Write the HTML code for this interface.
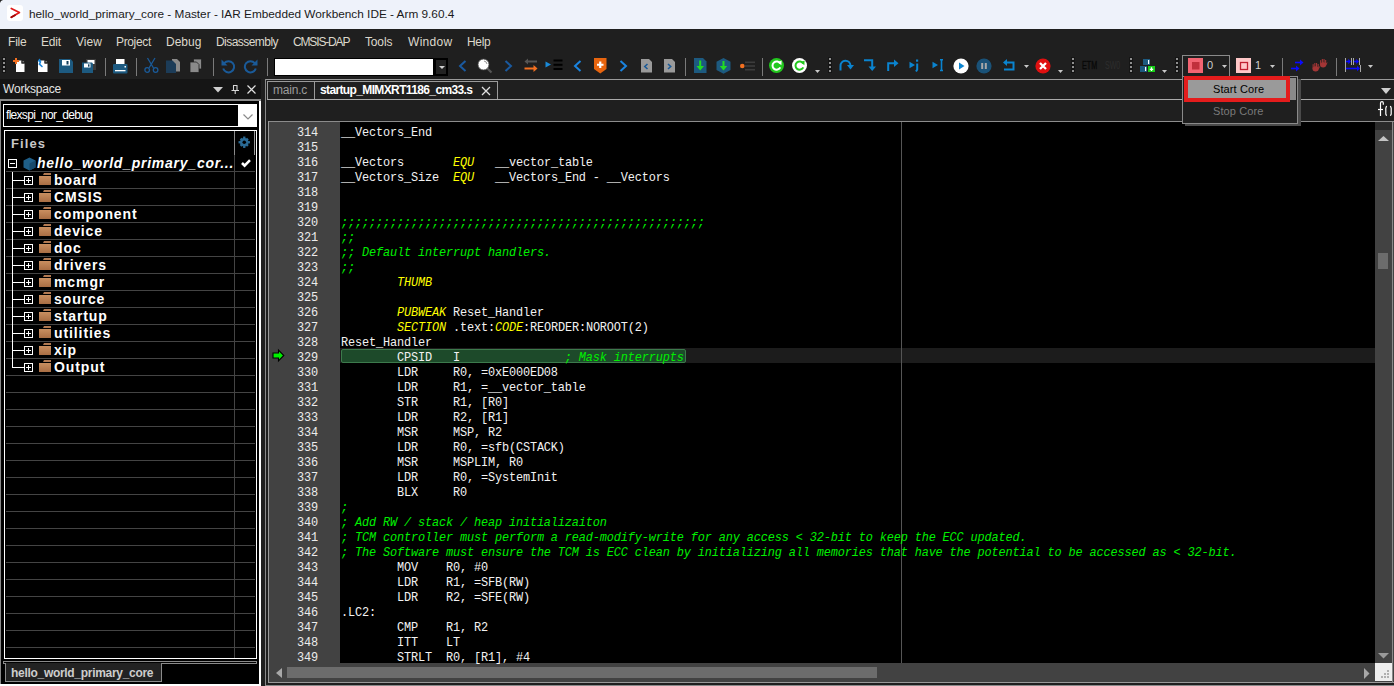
<!DOCTYPE html>
<html><head><meta charset="utf-8"><style>
*{margin:0;padding:0;box-sizing:border-box}
html,body{width:1394px;height:686px;overflow:hidden;background:#1f1f1f;font-family:"Liberation Sans",sans-serif}
.a{position:absolute;white-space:nowrap}
svg.a{overflow:visible}
.code{font-family:"Liberation Mono",monospace;font-size:11.9px;letter-spacing:-0.14px;line-height:15px;white-space:pre;color:#f2f2f2}
.k{color:#ffff00;font-style:italic}
.c{color:#00f000;font-style:italic}
</style></head><body>
<div class="a" style="left:0px;top:0px;width:1394px;height:29px;background:#eef2fa"></div>
<svg class="a" style="left:0px;top:0px" width="4" height="4" viewBox="0 0 4 4"><path d="M0 0 H3 Q0.5 0.5 0 3 Z" fill="#202020"/></svg>
<svg class="a" style="left:7px;top:5px" width="16" height="16" viewBox="0 0 16 16"><rect x="0" y="0" width="16" height="16" rx="3" fill="#fff"/><path d="M4.3 3.4 L12.4 7.6 M12.4 7.6 L4.3 12.3" stroke="#e01818" stroke-width="1.7" stroke-linecap="round" fill="none"/><path d="M8 10.2 L4.3 12.3" stroke="#a00808" stroke-width="1.7" stroke-linecap="round"/></svg>
<div class="a" style="left:29px;top:7px;font-size:11.8px;color:#1a1a1a">hello_world_primary_core - Master - IAR Embedded Workbench IDE - Arm 9.60.4</div>
<div class="a" style="left:0px;top:29px;width:1394px;height:50px;background:#1f1f1f"></div>
<div class="a" style="left:8px;top:35px;font-size:12px;color:#dcd8cc;letter-spacing:-0.2px">File</div>
<div class="a" style="left:41px;top:35px;font-size:12px;color:#dcd8cc;letter-spacing:-0.2px">Edit</div>
<div class="a" style="left:76px;top:35px;font-size:12px;color:#dcd8cc;letter-spacing:0px">View</div>
<div class="a" style="left:116px;top:35px;font-size:12px;color:#dcd8cc;letter-spacing:-0.35px">Project</div>
<div class="a" style="left:166px;top:35px;font-size:12px;color:#dcd8cc;letter-spacing:0px">Debug</div>
<div class="a" style="left:216px;top:35px;font-size:12px;color:#dcd8cc;letter-spacing:-0.55px">Disassembly</div>
<div class="a" style="left:293px;top:35px;font-size:12px;color:#dcd8cc;letter-spacing:-1.15px">CMSIS-DAP</div>
<div class="a" style="left:365px;top:35px;font-size:12px;color:#dcd8cc;letter-spacing:-0.15px">Tools</div>
<div class="a" style="left:408px;top:35px;font-size:12px;color:#dcd8cc;letter-spacing:0.3px">Window</div>
<div class="a" style="left:467px;top:35px;font-size:12px;color:#dcd8cc;letter-spacing:-0.35px">Help</div>
<svg class="a" style="left:2px;top:57px" width="4" height="16" viewBox="0 0 4 16"><rect x="0" y="0" width="4" height="4" fill="#151515"/><rect x="1" y="1" width="2" height="2" fill="#8f8f8f"/><rect x="0" y="4" width="4" height="4" fill="#151515"/><rect x="1" y="5" width="2" height="2" fill="#8f8f8f"/><rect x="0" y="8" width="4" height="4" fill="#151515"/><rect x="1" y="9" width="2" height="2" fill="#8f8f8f"/><rect x="0" y="12" width="4" height="4" fill="#151515"/><rect x="1" y="13" width="2" height="2" fill="#8f8f8f"/></svg>
<svg class="a" style="left:13px;top:57px" width="13" height="16" viewBox="0 0 13 16"><path d="M3 3.5 H8.5 V6.5 H11.5 V15 H3 Z" fill="#fff"/><rect x="8.5" y="3.5" width="3" height="3" fill="#2a2a2a"/><rect x="9.6" y="4" width="1.2" height="1.2" fill="#888"/><path d="M0 4 H6 M3 1 V7" stroke="#f37021" stroke-width="2"/></svg>
<svg class="a" style="left:37px;top:58px" width="12" height="15" viewBox="0 0 12 15"><path d="M1 2.5 H7.5 V5.5 H10.5 V14 H1 Z" fill="#fff"/><rect x="7.5" y="2.5" width="3" height="3" fill="#2a2a2a"/><rect x="8.6" y="3" width="1.2" height="1.2" fill="#888"/><path d="M2.5 2 L3.3 4.5 L2.4 6 L5 8.5" stroke="#1a84d8" stroke-width="1.6" fill="none" stroke-linecap="round"/><path d="M0.5 3.5 L2.5 0.5 L4.5 3.5 Z" fill="#1a84d8"/></svg>
<svg class="a" style="left:59px;top:59px" width="14" height="14" viewBox="0 0 14 14"><path d="M0 0 H11.5 L14 2.5 V14 H0 Z" fill="#1d5a80"/><rect x="3" y="1" width="8" height="5.5" fill="#fff"/><rect x="7.5" y="2" width="2" height="3.5" fill="#143f5c"/></svg>
<svg class="a" style="left:82px;top:59px" width="14" height="14" viewBox="0 0 14 14"><path d="M4 0 H14 V11 H4 Z" fill="#3a3a3a"/><rect x="5.5" y="1" width="7" height="4" fill="#fff"/><path d="M0 3.5 H10 L11 4.5 V14 H0 Z" fill="#1d5a80"/><rect x="2" y="4.5" width="6.5" height="4" fill="#fff"/><rect x="6" y="5.3" width="1.5" height="2.4" fill="#143f5c"/></svg>
<div class="a" style="left:105px;top:58px;width:1px;height:18px;background:#7a7a7a"></div>
<svg class="a" style="left:113px;top:58px" width="15" height="16" viewBox="0 0 15 16"><rect x="3" y="1" width="8.5" height="5.5" fill="#fff"/><rect x="0" y="6" width="14.5" height="9.5" rx="1" fill="#1d5a80"/><rect x="2" y="12" width="10.5" height="1.3" fill="#fff"/><rect x="11.5" y="8" width="1.5" height="1.5" fill="#fff"/></svg>
<div class="a" style="left:136px;top:58px;width:1px;height:18px;background:#7a7a7a"></div>
<svg class="a" style="left:144px;top:58px" width="15" height="15" viewBox="0 0 15 15"><path d="M3.5 0 L9.5 10 M11 0 L5 10" stroke="#1a5a98" stroke-width="1.3" fill="none"/><circle cx="3.2" cy="12" r="2.3" stroke="#1a5a98" stroke-width="1.3" fill="none"/><circle cx="11.6" cy="12" r="2.3" stroke="#1a5a98" stroke-width="1.3" fill="none"/></svg>
<svg class="a" style="left:166px;top:59px" width="15" height="15" viewBox="0 0 15 15"><path d="M6 0 H11 L14 3 V12.5 H6 Z" fill="#8a8a8a"/><path d="M0 1.5 H6.5 L10 5 V14 H0 Z" fill="#1c3c58"/></svg>
<svg class="a" style="left:190px;top:59px" width="12" height="14" viewBox="0 0 12 14"><path d="M3.5 0 H11.5 V10 H3.5 Z" fill="#8a8a8a" stroke="#1f1f1f" stroke-width="0.8"/><path d="M0 3 H6.5 L9 5.5 V13.5 H0 Z" fill="#8a8a8a" stroke="#1f1f1f" stroke-width="0.8"/></svg>
<div class="a" style="left:213px;top:58px;width:1px;height:18px;background:#7a7a7a"></div>
<svg class="a" style="left:221px;top:59px" width="14" height="14" viewBox="0 0 14 14"><path d="M3.2 4.2 A5.6 5.6 0 1 1 2.2 9.5" stroke="#1a5a98" stroke-width="2" fill="none"/><path d="M0.5 0.5 V6.5 H6.5 Z" fill="#1a5a98"/></svg>
<svg class="a" style="left:244px;top:59px" width="14" height="14" viewBox="0 0 14 14"><path d="M10.8 4.2 A5.6 5.6 0 1 0 11.8 9.5" stroke="#1a5a98" stroke-width="2" fill="none"/><path d="M13.5 0.5 V6.5 H7.5 Z" fill="#1a5a98"/></svg>
<div class="a" style="left:267px;top:58px;width:1px;height:18px;background:#7a7a7a"></div>
<div class="a" style="left:274px;top:58px;width:174px;height:18px;background:#000"></div>
<div class="a" style="left:275px;top:59px;width:158px;height:16px;background:#fff"></div>
<div class="a" style="left:436px;top:60px;width:10px;height:14px;background:#222"></div>
<svg class="a" style="left:439px;top:66px" width="6" height="3" viewBox="0 0 6 3"><path d="M0 0 H6 L3.0 3 Z" fill="#d0d0d0"/></svg>
<svg class="a" style="left:458px;top:60px" width="9" height="12" viewBox="0 0 9 12"><path d="M7.5 1 L2 6 L7.5 11" stroke="#1a5aa0" stroke-width="2" fill="none"/></svg>
<svg class="a" style="left:477px;top:58px" width="16" height="16" viewBox="0 0 16 16"><path d="M9.5 9.5 L14.5 14.5" stroke="#555" stroke-width="2.2"/><circle cx="6.5" cy="6.5" r="5.5" fill="#fff" stroke="#444" stroke-width="0.8"/><path d="M7 3 A3.5 3.5 0 0 1 10 6" stroke="#888" stroke-width="0.9" fill="none"/></svg>
<svg class="a" style="left:504px;top:60px" width="9" height="12" viewBox="0 0 9 12"><path d="M1.5 1 L7 6 L1.5 11" stroke="#1a5aa0" stroke-width="2" fill="none"/></svg>
<svg class="a" style="left:524px;top:58px" width="14" height="16" viewBox="0 0 14 16"><path d="M13 3.5 H3" stroke="#555" stroke-width="2"/><path d="M4 0.5 L0.5 3.5 L4 6.5 Z" fill="#555"/><path d="M0.5 10.5 H10" stroke="#f37021" stroke-width="2"/><path d="M9.5 7 L13.5 10.5 L9.5 14 Z" fill="#f37021"/></svg>
<svg class="a" style="left:545px;top:59px" width="18" height="13" viewBox="0 0 18 13"><path d="M0.5 2.5 L6 5.5 L0.5 8.5 Z" fill="#1a8ad8"/><rect x="8.5" y="0.5" width="9" height="2" fill="#000"/><rect x="8.5" y="4.8" width="9" height="2" fill="#000"/><rect x="8.5" y="9" width="9" height="2" fill="#000"/></svg>
<svg class="a" style="left:573px;top:60px" width="9" height="12" viewBox="0 0 9 12"><path d="M7.5 1 L2 6 L7.5 11" stroke="#1a84e0" stroke-width="2" fill="none"/></svg>
<svg class="a" style="left:594px;top:58px" width="13" height="16" viewBox="0 0 13 16"><path d="M0 0 H12.5 V11 L6.25 15.5 L0 11 Z" fill="#e8650f"/><path d="M6.25 3.5 V10 M3 6.75 H9.5" stroke="#fff" stroke-width="2.2"/></svg>
<svg class="a" style="left:619px;top:60px" width="9" height="12" viewBox="0 0 9 12"><path d="M1.5 1 L7 6 L1.5 11" stroke="#1a84e0" stroke-width="2" fill="none"/></svg>
<svg class="a" style="left:641px;top:59px" width="11" height="14" viewBox="0 0 11 14"><path d="M0 0 H8 L11 3 V13.5 H0 Z" fill="#9a9a9a"/><path d="M6.5 5 L3.8 7.5 L6.5 10" stroke="#1a5a98" stroke-width="1.6" fill="none"/></svg>
<svg class="a" style="left:664px;top:59px" width="11" height="14" viewBox="0 0 11 14"><path d="M0 0 H8 L11 3 V13.5 H0 Z" fill="#9a9a9a"/><path d="M4 5 L6.7 7.5 L4 10" stroke="#1a5a98" stroke-width="1.6" fill="none"/></svg>
<div class="a" style="left:685px;top:58px;width:1px;height:18px;background:#7a7a7a"></div>
<svg class="a" style="left:694px;top:58px" width="13" height="16" viewBox="0 0 13 16"><path d="M0 0 H9 L12.5 3.5 V15 H0 Z" fill="#1d5a80"/><path d="M6.2 2.5 V11" stroke="#22dd22" stroke-width="2"/><path d="M2.5 8 L6.2 12.5 L10 8 Z" fill="#22dd22"/></svg>
<svg class="a" style="left:716px;top:58px" width="15" height="16" viewBox="0 0 15 16"><path d="M7.5 0 L14.5 3.8 V12 L7.5 15.8 L0.5 12 V3.8 Z" fill="#1d5a80"/><path d="M7.5 3 V11" stroke="#22dd22" stroke-width="2"/><path d="M3.8 8 L7.5 12.5 L11.2 8 Z" fill="#22dd22"/></svg>
<svg class="a" style="left:740px;top:61px" width="15" height="10" viewBox="0 0 15 10"><circle cx="2.3" cy="5" r="2.3" fill="#f37021"/><rect x="5" y="0.5" width="10" height="1.6" fill="#3c3c3c"/><rect x="5" y="4.2" width="10" height="1.6" fill="#3c3c3c"/><rect x="5" y="7.9" width="10" height="1.6" fill="#3c3c3c"/></svg>
<div class="a" style="left:762px;top:58px;width:1px;height:18px;background:#7a7a7a"></div>
<svg class="a" style="left:769px;top:58px" width="16" height="16" viewBox="0 0 16 16"><circle cx="7.5" cy="7.5" r="7.5" fill="#22c81e"/><path d="M11.2 5.6 A4.1 4.1 0 1 0 11.3 9.4" stroke="#fff" stroke-width="2" fill="none"/><path d="M8.8 4.2 L12.6 2.4 L12.4 7.2 Z" fill="#fff"/></svg>
<svg class="a" style="left:792px;top:58px" width="16" height="16" viewBox="0 0 16 16"><circle cx="7.5" cy="7.5" r="7.5" fill="#fff"/><path d="M11.2 5.6 A4.1 4.1 0 1 0 11.3 9.4" stroke="#22c81e" stroke-width="2" fill="none"/><path d="M8.8 4.2 L12.6 2.4 L12.4 7.2 Z" fill="#22c81e"/></svg>
<svg class="a" style="left:815px;top:70px" width="5" height="3" viewBox="0 0 5 3"><path d="M0 0 H5 L2.5 3 Z" fill="#c8c8c8"/></svg>
<svg class="a" style="left:828px;top:57px" width="4" height="16" viewBox="0 0 4 16"><rect x="0" y="0" width="4" height="4" fill="#151515"/><rect x="1" y="1" width="2" height="2" fill="#8f8f8f"/><rect x="0" y="4" width="4" height="4" fill="#151515"/><rect x="1" y="5" width="2" height="2" fill="#8f8f8f"/><rect x="0" y="8" width="4" height="4" fill="#151515"/><rect x="1" y="9" width="2" height="2" fill="#8f8f8f"/><rect x="0" y="12" width="4" height="4" fill="#151515"/><rect x="1" y="13" width="2" height="2" fill="#8f8f8f"/></svg>
<svg class="a" style="left:839px;top:59px" width="15" height="12" viewBox="0 0 15 12"><path d="M1.5 11.5 V7 A5 5 0 0 1 11.5 6.5" stroke="#0a84d0" stroke-width="2" fill="none"/><path d="M8 6 H15 L11.5 10.5 Z" fill="#0a84d0"/></svg>
<svg class="a" style="left:864px;top:59px" width="12" height="13" viewBox="0 0 12 13"><path d="M0 1.2 H8.2 V8" stroke="#0a84d0" stroke-width="2" fill="none"/><path d="M4.5 7.5 H12 L8.2 12 Z" fill="#0a84d0"/></svg>
<svg class="a" style="left:887px;top:58px" width="12" height="14" viewBox="0 0 12 14"><path d="M1.2 13 V5.3 H7.5" stroke="#0a84d0" stroke-width="2" fill="none"/><path d="M7 1.5 L11.5 5.3 L7 9 Z" fill="#0a84d0"/></svg>
<svg class="a" style="left:909px;top:59px" width="11" height="13" viewBox="0 0 11 13"><path d="M0.5 2.8 L6 6 L0.5 9.2 Z" fill="#0a84d0"/><rect x="7" y="0.5" width="2.2" height="2.2" fill="#0a84d0"/><path d="M8.2 4.5 V10.5 L7 12.5" stroke="#0a84d0" stroke-width="2" fill="none"/></svg>
<svg class="a" style="left:932px;top:59px" width="12" height="13" viewBox="0 0 12 13"><path d="M0.5 2.8 L6 6 L0.5 9.2 Z" fill="#0a84d0"/><path d="M8 0.8 H11 M9.5 0.8 V11.5 M8 11.5 H11" stroke="#0a84d0" stroke-width="1.6" fill="none"/></svg>
<svg class="a" style="left:953px;top:58px" width="16" height="16" viewBox="0 0 16 16"><circle cx="8" cy="8" r="7.6" fill="#fff"/><path d="M6 4.5 L11.5 8 L6 11.5 Z" fill="#0a84d0"/></svg>
<svg class="a" style="left:976px;top:58px" width="16" height="16" viewBox="0 0 16 16"><circle cx="8" cy="8" r="7.6" fill="#1a5278"/><rect x="5.2" y="5" width="2" height="6" fill="#a8a8a8"/><rect x="8.8" y="5" width="2" height="6" fill="#a8a8a8"/></svg>
<svg class="a" style="left:1003px;top:59px" width="12" height="12" viewBox="0 0 12 12"><path d="M3 3.5 H10.5 V10.5 H1" stroke="#0a84d0" stroke-width="2" fill="none"/><path d="M4 0 L0 3.5 L4 7 Z" fill="#0a84d0"/></svg>
<svg class="a" style="left:1024px;top:65px" width="5" height="3" viewBox="0 0 5 3"><path d="M0 0 H5 L2.5 3 Z" fill="#c8c8c8"/></svg>
<svg class="a" style="left:1035px;top:58px" width="16" height="16" viewBox="0 0 16 16"><circle cx="8" cy="8" r="7.6" fill="#e01010"/><path d="M5 5 L11 11 M11 5 L5 11" stroke="#fff" stroke-width="2.3"/></svg>
<svg class="a" style="left:1058px;top:70px" width="5" height="3" viewBox="0 0 5 3"><path d="M0 0 H5 L2.5 3 Z" fill="#c8c8c8"/></svg>
<svg class="a" style="left:1071px;top:57px" width="4" height="16" viewBox="0 0 4 16"><rect x="0" y="0" width="4" height="4" fill="#151515"/><rect x="1" y="1" width="2" height="2" fill="#8f8f8f"/><rect x="0" y="4" width="4" height="4" fill="#151515"/><rect x="1" y="5" width="2" height="2" fill="#8f8f8f"/><rect x="0" y="8" width="4" height="4" fill="#151515"/><rect x="1" y="9" width="2" height="2" fill="#8f8f8f"/><rect x="0" y="12" width="4" height="4" fill="#151515"/><rect x="1" y="13" width="2" height="2" fill="#8f8f8f"/></svg>
<div class="a" style="left:1082px;top:60px;font-size:10px;color:#080808;transform:scaleX(0.72);transform-origin:0 0;-webkit-text-stroke:0.3px #080808">ETM</div>
<div class="a" style="left:1105px;top:60px;font-size:10px;color:#2e2e2e;transform:scaleX(0.7);transform-origin:0 0">SW0</div>
<svg class="a" style="left:1129px;top:57px" width="4" height="16" viewBox="0 0 4 16"><rect x="0" y="0" width="4" height="4" fill="#151515"/><rect x="1" y="1" width="2" height="2" fill="#8f8f8f"/><rect x="0" y="4" width="4" height="4" fill="#151515"/><rect x="1" y="5" width="2" height="2" fill="#8f8f8f"/><rect x="0" y="8" width="4" height="4" fill="#151515"/><rect x="1" y="9" width="2" height="2" fill="#8f8f8f"/><rect x="0" y="12" width="4" height="4" fill="#151515"/><rect x="1" y="13" width="2" height="2" fill="#8f8f8f"/></svg>
<svg class="a" style="left:1140px;top:59px" width="16" height="14" viewBox="0 0 16 14"><rect x="3" y="0" width="7" height="6" fill="#1d5a80"/><rect x="8" y="1" width="1.2" height="4" fill="#fff"/><rect x="0" y="7" width="7" height="6" fill="#1d5a80"/><rect x="5" y="8" width="1.2" height="4" fill="#fff"/><rect x="8" y="7" width="7" height="6" fill="#18d018"/><path d="M11.5 8.2 V12 M9.8 10.3 H13.2" stroke="#fff" stroke-width="1.3"/></svg>
<svg class="a" style="left:1162px;top:70px" width="5" height="3" viewBox="0 0 5 3"><path d="M0 0 H5 L2.5 3 Z" fill="#c8c8c8"/></svg>
<svg class="a" style="left:1175px;top:57px" width="4" height="16" viewBox="0 0 4 16"><rect x="0" y="0" width="4" height="4" fill="#151515"/><rect x="1" y="1" width="2" height="2" fill="#8f8f8f"/><rect x="0" y="4" width="4" height="4" fill="#151515"/><rect x="1" y="5" width="2" height="2" fill="#8f8f8f"/><rect x="0" y="8" width="4" height="4" fill="#151515"/><rect x="1" y="9" width="2" height="2" fill="#8f8f8f"/><rect x="0" y="12" width="4" height="4" fill="#151515"/><rect x="1" y="13" width="2" height="2" fill="#8f8f8f"/></svg>
<div class="a" style="left:1182px;top:55px;width:48px;height:1px;background:#8a8a8a"></div>
<div class="a" style="left:1182px;top:55px;width:1px;height:22px;background:#8a8a8a"></div>
<div class="a" style="left:1229px;top:55px;width:1px;height:22px;background:#8a8a8a"></div>
<svg class="a" style="left:1188px;top:58px" width="15" height="15" viewBox="0 0 15 15"><rect x="0" y="0" width="15" height="15" fill="#f26472"/><rect x="4" y="4" width="7.5" height="7.5" fill="#c0303c"/></svg>
<div class="a" style="left:1207px;top:59px;font-size:11px;color:#d0d0d0">0</div>
<svg class="a" style="left:1222px;top:65px" width="5" height="3" viewBox="0 0 5 3"><path d="M0 0 H5 L2.5 3 Z" fill="#c8c8c8"/></svg>
<svg class="a" style="left:1236px;top:58px" width="15" height="15" viewBox="0 0 15 15"><rect x="0" y="0" width="15" height="15" fill="#ffc8c8"/><rect x="4.5" y="4.5" width="7" height="7" fill="none" stroke="#c02030" stroke-width="1.3"/></svg>
<div class="a" style="left:1255px;top:59px;font-size:11px;color:#d0d0d0">1</div>
<svg class="a" style="left:1270px;top:65px" width="5" height="3" viewBox="0 0 5 3"><path d="M0 0 H5 L2.5 3 Z" fill="#c8c8c8"/></svg>
<div class="a" style="left:1282px;top:58px;width:1px;height:18px;background:#7a7a7a"></div>
<svg class="a" style="left:1291px;top:59px" width="13" height="13" viewBox="0 0 13 13"><path d="M4 3.5 H10" stroke="#0a0aff" stroke-width="1.6"/><path d="M9 0.5 L12.5 3.5 L9 6.5 Z" fill="#0a0aff"/><path d="M0 9.5 H6" stroke="#0a0aff" stroke-width="1.6"/><path d="M5 6.5 L8.5 9.5 L5 12.5 Z" fill="#0a0aff"/></svg>
<svg class="a" style="left:1312px;top:59px" width="16" height="13" viewBox="0 0 16 13"><g transform="translate(0 4)" fill="#a33636"><ellipse cx="3.6" cy="5.8" rx="3.1" ry="2.6"/><rect x="0.6" y="1.2" width="1.1" height="4.5"/><rect x="2.3" y="0" width="1.1" height="5"/><rect x="4" y="0" width="1.1" height="5"/><rect x="5.6" y="1" width="1.1" height="4.5"/><path d="M6 5 L7.6 3.2 L8 3.8 L6.6 6.5 Z"/></g><g transform="translate(7.5 0)" fill="#a33636"><ellipse cx="3.6" cy="5.8" rx="3.1" ry="2.6"/><rect x="0.6" y="1.2" width="1.1" height="4.5"/><rect x="2.3" y="0" width="1.1" height="5"/><rect x="4" y="0" width="1.1" height="5"/><rect x="5.6" y="1" width="1.1" height="4.5"/><path d="M6 5 L7.6 3.2 L8 3.8 L6.6 6.5 Z"/></g></svg>
<div class="a" style="left:1336px;top:58px;width:1px;height:18px;background:#7a7a7a"></div>
<svg class="a" style="left:1344px;top:58px" width="18" height="15" viewBox="0 0 18 15"><path d="M1.5 0 V14 M7.5 0 V7 M9.5 0 V7 M15.5 0 V7 M16.5 7 V14" stroke="#a8a8a8" stroke-width="1"/><path d="M2 3.5 H5" stroke="#0a0aff" stroke-width="1.6"/><path d="M4.3 0.8 L7 3.5 L4.3 6.2 Z" fill="#0a0aff"/><path d="M10 3.5 H13" stroke="#0a0aff" stroke-width="1.6"/><path d="M12.3 0.8 L15 3.5 L12.3 6.2 Z" fill="#0a0aff"/><path d="M2 10.5 H13.5" stroke="#0a0aff" stroke-width="1.6"/><path d="M13 7.8 L16 10.5 L13 13.2 Z" fill="#0a0aff"/></svg>
<svg class="a" style="left:1368px;top:65px" width="5" height="3" viewBox="0 0 5 3"><path d="M0 0 H5 L2.5 3 Z" fill="#c8c8c8"/></svg>
<div class="a" style="left:0px;top:79px;width:261px;height:21px;background:#151515"></div>
<div class="a" style="left:3px;top:82px;font-size:12px;color:#e4e4e4;letter-spacing:-0.2px">Workspace</div>
<div class="a" style="left:0px;top:99px;width:261px;height:2px;background:#8a8a8a"></div>
<div class="a" style="left:0px;top:101px;width:259px;height:583px;background:#000"></div>
<div class="a" style="left:0px;top:101px;width:1px;height:585px;background:#888"></div>
<div class="a" style="left:259px;top:101px;width:2px;height:585px;background:#fff"></div>
<div class="a" style="left:0px;top:684px;width:260px;height:2px;background:#fff"></div>
<div class="a" style="left:3px;top:104px;width:254px;height:23px;border:1.5px solid #fff;background:#000"></div>
<div class="a" style="left:238px;top:105px;width:18px;height:21px;background:#fff"></div>
<svg class="a" style="left:243px;top:114px" width="10" height="6" viewBox="0 0 10 6"><path d="M0.5 0.5 L5 5 L9.5 0.5" stroke="#8a8a8a" stroke-width="1.2" fill="none"/></svg>
<div class="a" style="left:6px;top:108px;font-size:12px;color:#fff;letter-spacing:-0.7px">flexspi_nor_debug</div>
<div class="a" style="left:4px;top:130px;width:253px;height:529px;border:1.5px solid #fff;background:#000"></div>
<div class="a" style="left:6px;top:171px;width:249px;height:1px;background:#444"></div>
<div class="a" style="left:6px;top:188px;width:249px;height:1px;background:#444"></div>
<div class="a" style="left:6px;top:205px;width:249px;height:1px;background:#444"></div>
<div class="a" style="left:6px;top:222px;width:249px;height:1px;background:#444"></div>
<div class="a" style="left:6px;top:239px;width:249px;height:1px;background:#444"></div>
<div class="a" style="left:6px;top:256px;width:249px;height:1px;background:#444"></div>
<div class="a" style="left:6px;top:273px;width:249px;height:1px;background:#444"></div>
<div class="a" style="left:6px;top:290px;width:249px;height:1px;background:#444"></div>
<div class="a" style="left:6px;top:307px;width:249px;height:1px;background:#444"></div>
<div class="a" style="left:6px;top:324px;width:249px;height:1px;background:#444"></div>
<div class="a" style="left:6px;top:341px;width:249px;height:1px;background:#444"></div>
<div class="a" style="left:6px;top:358px;width:249px;height:1px;background:#444"></div>
<div class="a" style="left:6px;top:375px;width:249px;height:1px;background:#444"></div>
<div class="a" style="left:6px;top:392px;width:249px;height:1px;background:#444"></div>
<div class="a" style="left:6px;top:409px;width:249px;height:1px;background:#444"></div>
<div class="a" style="left:6px;top:426px;width:249px;height:1px;background:#444"></div>
<div class="a" style="left:6px;top:443px;width:249px;height:1px;background:#444"></div>
<div class="a" style="left:6px;top:460px;width:249px;height:1px;background:#444"></div>
<div class="a" style="left:6px;top:477px;width:249px;height:1px;background:#444"></div>
<div class="a" style="left:6px;top:494px;width:249px;height:1px;background:#444"></div>
<div class="a" style="left:6px;top:511px;width:249px;height:1px;background:#444"></div>
<div class="a" style="left:6px;top:528px;width:249px;height:1px;background:#444"></div>
<div class="a" style="left:6px;top:545px;width:249px;height:1px;background:#444"></div>
<div class="a" style="left:6px;top:562px;width:249px;height:1px;background:#444"></div>
<div class="a" style="left:6px;top:579px;width:249px;height:1px;background:#444"></div>
<div class="a" style="left:6px;top:596px;width:249px;height:1px;background:#444"></div>
<div class="a" style="left:6px;top:613px;width:249px;height:1px;background:#444"></div>
<div class="a" style="left:6px;top:630px;width:249px;height:1px;background:#444"></div>
<div class="a" style="left:6px;top:647px;width:249px;height:1px;background:#444"></div>
<div class="a" style="left:234px;top:131px;width:1px;height:24px;background:#8a8a8a"></div>
<div class="a" style="left:234px;top:155px;width:1px;height:503px;background:#444"></div>
<div class="a" style="left:254px;top:131px;width:1px;height:24px;background:#9a9a9a"></div>
<div class="a" style="left:11px;top:136px;font-size:13px;font-weight:bold;color:#c8c8c8;letter-spacing:1.1px">Files</div>
<svg class="a" style="left:238px;top:136px" width="12.5" height="12.5" viewBox="0 0 14 14"><g fill="#2b6a94"><circle cx="7" cy="7" r="4.8"/><rect x="5.7" y="0.6" width="2.6" height="12.8"/><rect x="0.6" y="5.7" width="12.8" height="2.6"/><rect x="5.7" y="1.2" width="2.6" height="11.6" transform="rotate(45 7 7)"/><rect x="5.7" y="1.2" width="2.6" height="11.6" transform="rotate(-45 7 7)"/></g><circle cx="7" cy="7" r="2" fill="#000"/></svg>
<div class="a" style="left:8px;top:159px;width:9px;height:9px;border:1px solid #fff;background:#000"></div>
<div class="a" style="left:10px;top:163px;width:5px;height:1px;background:#fff"></div>
<svg class="a" style="left:23px;top:157px" width="13" height="14" viewBox="0 0 13 14"><path d="M6.5 0.5 L12.5 3.5 L12.5 10.5 L6.5 13.5 L0.5 10.5 L0.5 3.5 Z" fill="#1f5f88"/><path d="M6.5 6.5 L12.5 3.5 L12.5 10.5 L6.5 13.5 Z" fill="#174a6c"/></svg>
<div class="a" style="left:37px;top:155px;font-size:14px;font-weight:bold;font-style:italic;color:#fff;letter-spacing:0.76px">hello_world_primary_cor...</div>
<svg class="a" style="left:241px;top:159px" width="10" height="8" viewBox="0 0 10 8"><path d="M1 4 L3.6 6.6 L9 1.2" stroke="#fff" stroke-width="2.6" fill="none"/></svg>
<div class="a" style="left:24px;top:176px;width:9px;height:9px;border:1px solid #fff;background:#000"></div>
<div class="a" style="left:26px;top:180px;width:5px;height:1px;background:#fff"></div>
<div class="a" style="left:28px;top:178px;width:1px;height:5px;background:#fff"></div>
<div class="a" style="left:12px;top:180px;width:12px;height:1px;background:#fff"></div>
<svg class="a" style="left:39px;top:173px" width="13" height="13" viewBox="0 0 13 13"><defs><linearGradient id="fg" x1="0" y1="0" x2="0" y2="1"><stop offset="0" stop-color="#c98f60"/><stop offset="1" stop-color="#a96e44"/></linearGradient></defs><path d="M4 2 L5 0 L12 0 L12 2 Z" fill="#b27a52"/><rect x="0" y="3" width="12" height="9" fill="url(#fg)"/></svg>
<div class="a" style="left:54px;top:172px;font-size:14px;font-weight:bold;color:#fff;letter-spacing:0.9px">board</div>
<div class="a" style="left:24px;top:193px;width:9px;height:9px;border:1px solid #fff;background:#000"></div>
<div class="a" style="left:26px;top:197px;width:5px;height:1px;background:#fff"></div>
<div class="a" style="left:28px;top:195px;width:1px;height:5px;background:#fff"></div>
<div class="a" style="left:12px;top:197px;width:12px;height:1px;background:#fff"></div>
<svg class="a" style="left:39px;top:190px" width="13" height="13" viewBox="0 0 13 13"><defs><linearGradient id="fg" x1="0" y1="0" x2="0" y2="1"><stop offset="0" stop-color="#c98f60"/><stop offset="1" stop-color="#a96e44"/></linearGradient></defs><path d="M4 2 L5 0 L12 0 L12 2 Z" fill="#b27a52"/><rect x="0" y="3" width="12" height="9" fill="url(#fg)"/></svg>
<div class="a" style="left:54px;top:189px;font-size:14px;font-weight:bold;color:#fff;letter-spacing:0.9px">CMSIS</div>
<div class="a" style="left:24px;top:210px;width:9px;height:9px;border:1px solid #fff;background:#000"></div>
<div class="a" style="left:26px;top:214px;width:5px;height:1px;background:#fff"></div>
<div class="a" style="left:28px;top:212px;width:1px;height:5px;background:#fff"></div>
<div class="a" style="left:12px;top:214px;width:12px;height:1px;background:#fff"></div>
<svg class="a" style="left:39px;top:207px" width="13" height="13" viewBox="0 0 13 13"><defs><linearGradient id="fg" x1="0" y1="0" x2="0" y2="1"><stop offset="0" stop-color="#c98f60"/><stop offset="1" stop-color="#a96e44"/></linearGradient></defs><path d="M4 2 L5 0 L12 0 L12 2 Z" fill="#b27a52"/><rect x="0" y="3" width="12" height="9" fill="url(#fg)"/></svg>
<div class="a" style="left:54px;top:206px;font-size:14px;font-weight:bold;color:#fff;letter-spacing:0.9px">component</div>
<div class="a" style="left:24px;top:227px;width:9px;height:9px;border:1px solid #fff;background:#000"></div>
<div class="a" style="left:26px;top:231px;width:5px;height:1px;background:#fff"></div>
<div class="a" style="left:28px;top:229px;width:1px;height:5px;background:#fff"></div>
<div class="a" style="left:12px;top:231px;width:12px;height:1px;background:#fff"></div>
<svg class="a" style="left:39px;top:224px" width="13" height="13" viewBox="0 0 13 13"><defs><linearGradient id="fg" x1="0" y1="0" x2="0" y2="1"><stop offset="0" stop-color="#c98f60"/><stop offset="1" stop-color="#a96e44"/></linearGradient></defs><path d="M4 2 L5 0 L12 0 L12 2 Z" fill="#b27a52"/><rect x="0" y="3" width="12" height="9" fill="url(#fg)"/></svg>
<div class="a" style="left:54px;top:223px;font-size:14px;font-weight:bold;color:#fff;letter-spacing:0.9px">device</div>
<div class="a" style="left:24px;top:244px;width:9px;height:9px;border:1px solid #fff;background:#000"></div>
<div class="a" style="left:26px;top:248px;width:5px;height:1px;background:#fff"></div>
<div class="a" style="left:28px;top:246px;width:1px;height:5px;background:#fff"></div>
<div class="a" style="left:12px;top:248px;width:12px;height:1px;background:#fff"></div>
<svg class="a" style="left:39px;top:241px" width="13" height="13" viewBox="0 0 13 13"><defs><linearGradient id="fg" x1="0" y1="0" x2="0" y2="1"><stop offset="0" stop-color="#c98f60"/><stop offset="1" stop-color="#a96e44"/></linearGradient></defs><path d="M4 2 L5 0 L12 0 L12 2 Z" fill="#b27a52"/><rect x="0" y="3" width="12" height="9" fill="url(#fg)"/></svg>
<div class="a" style="left:54px;top:240px;font-size:14px;font-weight:bold;color:#fff;letter-spacing:0.9px">doc</div>
<div class="a" style="left:24px;top:261px;width:9px;height:9px;border:1px solid #fff;background:#000"></div>
<div class="a" style="left:26px;top:265px;width:5px;height:1px;background:#fff"></div>
<div class="a" style="left:28px;top:263px;width:1px;height:5px;background:#fff"></div>
<div class="a" style="left:12px;top:265px;width:12px;height:1px;background:#fff"></div>
<svg class="a" style="left:39px;top:258px" width="13" height="13" viewBox="0 0 13 13"><defs><linearGradient id="fg" x1="0" y1="0" x2="0" y2="1"><stop offset="0" stop-color="#c98f60"/><stop offset="1" stop-color="#a96e44"/></linearGradient></defs><path d="M4 2 L5 0 L12 0 L12 2 Z" fill="#b27a52"/><rect x="0" y="3" width="12" height="9" fill="url(#fg)"/></svg>
<div class="a" style="left:54px;top:257px;font-size:14px;font-weight:bold;color:#fff;letter-spacing:0.9px">drivers</div>
<div class="a" style="left:24px;top:278px;width:9px;height:9px;border:1px solid #fff;background:#000"></div>
<div class="a" style="left:26px;top:282px;width:5px;height:1px;background:#fff"></div>
<div class="a" style="left:28px;top:280px;width:1px;height:5px;background:#fff"></div>
<div class="a" style="left:12px;top:282px;width:12px;height:1px;background:#fff"></div>
<svg class="a" style="left:39px;top:275px" width="13" height="13" viewBox="0 0 13 13"><defs><linearGradient id="fg" x1="0" y1="0" x2="0" y2="1"><stop offset="0" stop-color="#c98f60"/><stop offset="1" stop-color="#a96e44"/></linearGradient></defs><path d="M4 2 L5 0 L12 0 L12 2 Z" fill="#b27a52"/><rect x="0" y="3" width="12" height="9" fill="url(#fg)"/></svg>
<div class="a" style="left:54px;top:274px;font-size:14px;font-weight:bold;color:#fff;letter-spacing:0.9px">mcmgr</div>
<div class="a" style="left:24px;top:295px;width:9px;height:9px;border:1px solid #fff;background:#000"></div>
<div class="a" style="left:26px;top:299px;width:5px;height:1px;background:#fff"></div>
<div class="a" style="left:28px;top:297px;width:1px;height:5px;background:#fff"></div>
<div class="a" style="left:12px;top:299px;width:12px;height:1px;background:#fff"></div>
<svg class="a" style="left:39px;top:292px" width="13" height="13" viewBox="0 0 13 13"><defs><linearGradient id="fg" x1="0" y1="0" x2="0" y2="1"><stop offset="0" stop-color="#c98f60"/><stop offset="1" stop-color="#a96e44"/></linearGradient></defs><path d="M4 2 L5 0 L12 0 L12 2 Z" fill="#b27a52"/><rect x="0" y="3" width="12" height="9" fill="url(#fg)"/></svg>
<div class="a" style="left:54px;top:291px;font-size:14px;font-weight:bold;color:#fff;letter-spacing:0.9px">source</div>
<div class="a" style="left:24px;top:312px;width:9px;height:9px;border:1px solid #fff;background:#000"></div>
<div class="a" style="left:26px;top:316px;width:5px;height:1px;background:#fff"></div>
<div class="a" style="left:28px;top:314px;width:1px;height:5px;background:#fff"></div>
<div class="a" style="left:12px;top:316px;width:12px;height:1px;background:#fff"></div>
<svg class="a" style="left:39px;top:309px" width="13" height="13" viewBox="0 0 13 13"><defs><linearGradient id="fg" x1="0" y1="0" x2="0" y2="1"><stop offset="0" stop-color="#c98f60"/><stop offset="1" stop-color="#a96e44"/></linearGradient></defs><path d="M4 2 L5 0 L12 0 L12 2 Z" fill="#b27a52"/><rect x="0" y="3" width="12" height="9" fill="url(#fg)"/></svg>
<div class="a" style="left:54px;top:308px;font-size:14px;font-weight:bold;color:#fff;letter-spacing:0.9px">startup</div>
<div class="a" style="left:24px;top:329px;width:9px;height:9px;border:1px solid #fff;background:#000"></div>
<div class="a" style="left:26px;top:333px;width:5px;height:1px;background:#fff"></div>
<div class="a" style="left:28px;top:331px;width:1px;height:5px;background:#fff"></div>
<div class="a" style="left:12px;top:333px;width:12px;height:1px;background:#fff"></div>
<svg class="a" style="left:39px;top:326px" width="13" height="13" viewBox="0 0 13 13"><defs><linearGradient id="fg" x1="0" y1="0" x2="0" y2="1"><stop offset="0" stop-color="#c98f60"/><stop offset="1" stop-color="#a96e44"/></linearGradient></defs><path d="M4 2 L5 0 L12 0 L12 2 Z" fill="#b27a52"/><rect x="0" y="3" width="12" height="9" fill="url(#fg)"/></svg>
<div class="a" style="left:54px;top:325px;font-size:14px;font-weight:bold;color:#fff;letter-spacing:0.9px">utilities</div>
<div class="a" style="left:24px;top:346px;width:9px;height:9px;border:1px solid #fff;background:#000"></div>
<div class="a" style="left:26px;top:350px;width:5px;height:1px;background:#fff"></div>
<div class="a" style="left:28px;top:348px;width:1px;height:5px;background:#fff"></div>
<div class="a" style="left:12px;top:350px;width:12px;height:1px;background:#fff"></div>
<svg class="a" style="left:39px;top:343px" width="13" height="13" viewBox="0 0 13 13"><defs><linearGradient id="fg" x1="0" y1="0" x2="0" y2="1"><stop offset="0" stop-color="#c98f60"/><stop offset="1" stop-color="#a96e44"/></linearGradient></defs><path d="M4 2 L5 0 L12 0 L12 2 Z" fill="#b27a52"/><rect x="0" y="3" width="12" height="9" fill="url(#fg)"/></svg>
<div class="a" style="left:54px;top:342px;font-size:14px;font-weight:bold;color:#fff;letter-spacing:0.9px">xip</div>
<div class="a" style="left:24px;top:363px;width:9px;height:9px;border:1px solid #fff;background:#000"></div>
<div class="a" style="left:26px;top:367px;width:5px;height:1px;background:#fff"></div>
<div class="a" style="left:28px;top:365px;width:1px;height:5px;background:#fff"></div>
<div class="a" style="left:12px;top:367px;width:12px;height:1px;background:#fff"></div>
<svg class="a" style="left:39px;top:360px" width="13" height="13" viewBox="0 0 13 13"><defs><linearGradient id="fg" x1="0" y1="0" x2="0" y2="1"><stop offset="0" stop-color="#c98f60"/><stop offset="1" stop-color="#a96e44"/></linearGradient></defs><path d="M4 2 L5 0 L12 0 L12 2 Z" fill="#b27a52"/><rect x="0" y="3" width="12" height="9" fill="url(#fg)"/></svg>
<div class="a" style="left:54px;top:359px;font-size:14px;font-weight:bold;color:#fff;letter-spacing:0.9px">Output</div>
<div class="a" style="left:12px;top:172px;width:1px;height:196px;background:#fff"></div>
<div class="a" style="left:3px;top:661px;width:254px;height:3px;border:1px solid #8a8a8a"></div>
<div class="a" style="left:5px;top:663px;width:157px;height:19px;background:#222;border:1px solid #8a8a8a;border-top:none"></div>
<div class="a" style="left:11px;top:666px;font-size:12px;font-weight:bold;color:#cdcdcd;letter-spacing:-0.3px">hello_world_primary_core</div>
<svg class="a" style="left:213px;top:87px" width="10" height="6" viewBox="0 0 10 6"><path d="M0 0 H10 L5 5.5 Z" fill="#cfcfcf"/></svg>
<svg class="a" style="left:231px;top:85px" width="8" height="9" viewBox="0 0 8 9"><path d="M2 0.5 H6.5 M2.5 0.5 V5.5 M6 0.5 V5.5 M0.5 5.5 H8 M4.2 5.5 V9" stroke="#d8d8d8" stroke-width="1.1" fill="none"/></svg>
<svg class="a" style="left:247px;top:85px" width="9" height="9" viewBox="0 0 9 9"><path d="M0.5 0.5 L8.5 8.5 M8.5 0.5 L0.5 8.5" stroke="#e0e0e0" stroke-width="1.2"/></svg>
<div class="a" style="left:261px;top:79px;width:1133px;height:607px;background:#1f1f1f"></div>
<div class="a" style="left:265px;top:79px;width:1129px;height:1px;background:#9a9a9a"></div>
<div class="a" style="left:265px;top:79px;width:1px;height:607px;background:#8a8a8a"></div>
<div class="a" style="left:267px;top:81px;width:231px;height:1px;background:#9a9a9a"></div>
<div class="a" style="left:267px;top:81px;width:1px;height:18px;background:#9a9a9a"></div>
<div class="a" style="left:267px;top:99px;width:1127px;height:1px;background:#aaa"></div>
<div class="a" style="left:314px;top:81px;width:1px;height:18px;background:#9a9a9a"></div>
<div class="a" style="left:497px;top:81px;width:1px;height:18px;background:#9a9a9a"></div>
<div class="a" style="left:273px;top:83px;font-size:12px;color:#9c9c9c;letter-spacing:-0.2px">main.c</div>
<div class="a" style="left:320px;top:83px;font-size:12px;font-weight:bold;color:#fff;letter-spacing:-0.63px">startup_MIMXRT1186_cm33.s</div>
<svg class="a" style="left:481px;top:86px" width="10" height="10" viewBox="0 0 10 10"><path d="M1 1 L9 9 M9 1 L1 9" stroke="#e0e0e0" stroke-width="1.3"/></svg>
<svg class="a" style="left:1381px;top:88px" width="10" height="6" viewBox="0 0 10 6"><path d="M0 0 H10 L5 6 Z" fill="#cfcfcf"/></svg>
<svg class="a" style="left:1376px;top:100px" width="18" height="18" viewBox="0 0 18 18"><g stroke="#fff" stroke-width="1.2" fill="none"><path d="M4.5 16 V3.2 Q4.5 1.6 6 1.6 Q7.3 1.6 7.3 3 V4.8"/><path d="M2 9.5 H7"/><path d="M10.6 6 L9.8 8 V14 L10.6 15.8"/><path d="M14.4 6 L15.2 8 V14 L14.4 15.8"/></g></svg>
<div class="a" style="left:268px;top:121px;width:1126px;height:1px;background:#8c8c8c"></div>
<div class="a" style="left:268px;top:121px;width:1px;height:562px;background:#9a9a9a"></div>
<div class="a" style="left:268px;top:682px;width:1126px;height:1px;background:#9a9a9a"></div>
<div class="a" style="left:265px;top:685px;width:1129px;height:1px;background:#8a8a8a"></div>
<div class="a" style="left:269px;top:122px;width:1125px;height:560px;background:#424242"></div>
<div class="a" style="left:340px;top:122px;width:1035px;height:541px;background:#000"></div>
<div class="a" style="left:1375px;top:122px;width:17px;height:560px;background:#424242"></div>
<div class="a" style="left:1375px;top:122px;width:17px;height:8px;background:#2a2a2a"></div>
<svg class="a" style="left:1378px;top:136px" width="11" height="5" viewBox="0 0 11 5"><path d="M0 5 L5.5 0 L11 5 Z" fill="#c4c4c4"/></svg>
<div class="a" style="left:1378px;top:253px;width:10px;height:16px;background:#6c6c6c"></div>
<svg class="a" style="left:1378px;top:653px" width="11" height="6" viewBox="0 0 11 6"><path d="M0 0 H11 L5.5 5.5 Z" fill="#9a9a9a"/></svg>
<div class="a" style="left:1375px;top:663px;width:17px;height:18px;background:#eeeeee"></div>
<svg class="a" style="left:1380px;top:670px" width="10" height="10" viewBox="0 0 10 10"><g fill="#b0b0b0"><rect x="7" y="0" width="2" height="2"/><rect x="4" y="3" width="2" height="2"/><rect x="7" y="3" width="2" height="2"/><rect x="1" y="6" width="2" height="2"/><rect x="4" y="6" width="2" height="2"/><rect x="7" y="6" width="2" height="2"/></g></svg>
<div class="a" style="left:1392px;top:122px;width:1px;height:561px;background:#8a8a8a"></div>
<svg class="a" style="left:276px;top:668px" width="6" height="10" viewBox="0 0 6 10"><path d="M6 0 V10 L0 5 Z" fill="#a8a8a8"/></svg>
<div class="a" style="left:287px;top:667px;width:590px;height:11px;background:#6c6c6c"></div>
<svg class="a" style="left:1364px;top:668px" width="6" height="11" viewBox="0 0 6 11"><path d="M0 0 V11 L5.5 5.5 Z" fill="#a8a8a8"/></svg>
<div class="a" style="left:340px;top:348px;width:1035px;height:15px;background:#1c1c1c"></div>
<div class="a" style="left:901px;top:122px;width:1px;height:541px;background:#555"></div>
<div class="a" style="left:341px;top:349px;width:345px;height:14px;background:#1d4a2a;border:1px solid #3c7a4c;border-radius:2px"></div>
<svg class="a" style="left:272px;top:349px" width="13" height="13" viewBox="0 0 13 13"><path d="M1 4 H6.5 V1 L11.8 6.5 L6.5 12 V9 H1 Z" fill="#00f000" stroke="#000" stroke-width="1.1" stroke-linejoin="miter"/></svg>
<div class="a code" style="left:269px;top:126px;width:49px;text-align:right;color:#ececec">314
315
316
317
318
319
320
321
322
323
324
325
326
327
328
329
330
331
332
333
334
335
336
337
338
339
340
341
342
343
344
345
346
347
348
349</div>
<div class="a code" style="left:341px;top:126px">__Vectors_End

__Vectors       <span class="k">EQU</span>   __vector_table
__Vectors_Size  <span class="k">EQU</span>   __Vectors_End - __Vectors


<span class="c">;;;;;;;;;;;;;;;;;;;;;;;;;;;;;;;;;;;;;;;;;;;;;;;;;;;;</span>
<span class="c">;;</span>
<span class="c">;; Default interrupt handlers.</span>
<span class="c">;;</span>
        <span class="k">THUMB</span>

        <span class="k">PUBWEAK</span> Reset_Handler
        <span class="k">SECTION</span> .text:<span class="k">CODE</span>:REORDER:NOROOT(2)
Reset_Handler
        CPSID   I               <span class="c">; Mask interrupts</span>
        LDR     R0, =0xE000ED08
        LDR     R1, =__vector_table
        STR     R1, [R0]
        LDR     R2, [R1]
        MSR     MSP, R2
        LDR     R0, =sfb(CSTACK)
        MSR     MSPLIM, R0
        LDR     R0, =SystemInit
        BLX     R0
<span class="c">;</span>
<span class="c">; Add RW / stack / heap initializaiton</span>
<span class="c">; TCM controller must perform a read-modify-write for any access &lt; 32-bit to keep the ECC updated.</span>
<span class="c">; The Software must ensure the TCM is ECC clean by initializing all memories that have the potential to be accessed as &lt; 32-bit.</span>
        MOV    R0, #0
        LDR    R1, =SFB(RW)
        LDR    R2, =SFE(RW)
.LC2:
        CMP    R1, R2
        ITT    LT
        STRLT  R0, [R1], #4</div>
<div class="a" style="left:1185px;top:79px;width:116px;height:47px;background:#4a4a4a"></div>
<div class="a" style="left:1182px;top:76px;width:116px;height:48px;background:#1f1f1f;border:1px solid #8a8a8a"></div>
<div class="a" style="left:1184px;top:76px;width:106px;height:26px;background:#e41c1c"></div>
<div class="a" style="left:1188px;top:80px;width:98px;height:18px;background:#9a9a9a"></div>
<div class="a" style="left:1290px;top:78px;width:6px;height:22px;background:#8a8a8a"></div>
<div class="a" style="left:1213px;top:83px;font-size:11px;color:#000;letter-spacing:0.1px">Start Core</div>
<div class="a" style="left:1213px;top:105px;font-size:11px;color:#7a7a7a;letter-spacing:0.1px">Stop Core</div>
</body></html>
